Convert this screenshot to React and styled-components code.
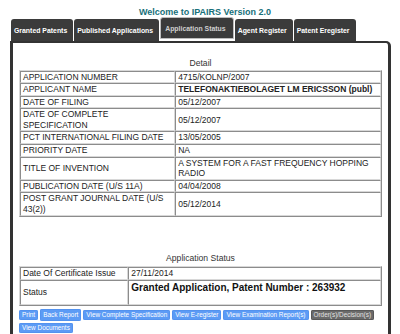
import React from 'react';
import styled, { createGlobalStyle } from 'styled-components';

const GlobalStyle = createGlobalStyle`
  body {
    margin: 0;
    background: #fff;
    font-family: "Liberation Sans", Arial, sans-serif;
  }
`;

const tabs = [
  { id: 'granted', name: 'Granted Patents' },
  { id: 'published', name: 'Published Applications' },
  { id: 'status', name: 'Application Status', active: true },
  { id: 'agent', name: 'Agent Register' },
  { id: 'eregister', name: 'Patent Eregister' },
];

const details = [
  { label: 'APPLICATION NUMBER', value: '4715/KOLNP/2007' },
  { label: 'APPLICANT NAME', value: 'TELEFONAKTIEBOLAGET LM ERICSSON (publ)', bold: true },
  { label: 'DATE OF FILING', value: '05/12/2007' },
  { label: 'DATE OF COMPLETE SPECIFICATION', value: '05/12/2007' },
  { label: 'PCT INTERNATIONAL FILING DATE', value: '13/05/2005' },
  { label: 'PRIORITY DATE', value: 'NA' },
  { label: 'TITLE OF INVENTION', value: 'A SYSTEM FOR A FAST FREQUENCY HOPPING RADIO' },
  { label: 'PUBLICATION DATE (U/S 11A)', value: '04/04/2008' },
  { label: 'POST GRANT JOURNAL DATE (U/S 43(2))', value: '05/12/2014' },
];

const actions = [
  { label: 'Print' },
  { label: 'Back Report', tall: true },
  { label: 'View Complete Specification' },
  { label: 'View E-register' },
  { label: 'View Examination Report(s)' },
  { label: 'Order(s)/Decision(s)', muted: true },
  { label: 'View Documents' },
];

const App = () => (
  <Page>
    <GlobalStyle />
    <Title>Welcome to IPAIRS Version 2.0</Title>
    <TabBar>
      {tabs.map((tab) => (
        <Tab key={tab.id} $active={tab.active}>
          {tab.name}
        </Tab>
      ))}
    </TabBar>
    <Panel>
      <Caption>Detail</Caption>
      <InfoTable>
        <tbody>
          {details.map((row) => (
            <tr key={row.label}>
              <Cell $width="43%">{row.label}</Cell>
              <Cell $bold={row.bold}>{row.value}</Cell>
            </tr>
          ))}
        </tbody>
      </InfoTable>

      <Caption $top={36}>Application Status</Caption>
      <InfoTable $top={3.5}>
        <tbody>
          <tr>
            <Cell $width="30%">Date Of Certificate Issue</Cell>
            <Cell>27/11/2014</Cell>
          </tr>
          <tr>
            <Cell>Status</Cell>
            <StatusValue>Granted Application, Patent Number : 263932</StatusValue>
          </tr>
        </tbody>
      </InfoTable>

      <ButtonRow>
        {actions.map((action) => (
          <ActionButton key={action.label} $tall={action.tall} $muted={action.muted}>
            {action.label}
          </ActionButton>
        ))}
      </ButtonRow>
    </Panel>
  </Page>
);

const Page = styled.div`
  width: 381px;
  margin-left: 10px;
`;

const Title = styled.h1`
  margin: 0;
  padding: 7px 0 0 9px;
  height: 10px;
  text-align: center;
  font-size: 9px;
  line-height: 10px;
  font-weight: bold;
  color: #17707a;
`;

const TabBar = styled.div`
  display: flex;
  align-items: flex-end;
  gap: 1px;
  height: 24px;
  padding-left: 1px;
`;

const Tab = styled.div`
  box-sizing: border-box;
  height: 22px;
  padding: 1px ${(p) => (p.$active ? '7px' : '6px')} 0 ${(p) => (p.$active ? '4px' : '3px')};
  margin-bottom: ${(p) => (p.$active ? '2px' : '0')};
  border: ${(p) => (p.$active ? '1px solid #bdbdbd' : 'none')};
  border-radius: 3px 3px 0 0;
  background: #3b3b3b;
  color: ${(p) => (p.$active ? '#cfcfcf' : '#ffffff')};
  font-size: 6.9px;
  font-weight: bold;
  line-height: ${(p) => (p.$active ? '19px' : '21px')};
  white-space: nowrap;
`;

const Panel = styled.div`
  min-height: 276px;
  padding: 15px 6px 0;
  border: 3px solid #333;
  border-top-width: 2px;
  border-bottom: none;
  border-top-right-radius: 5px;
  background: #fff;
`;

const Caption = styled.div`
  margin-top: ${(p) => p.$top || 0}px;
  text-align: center;
  font-size: 8.6px;
  line-height: 10px;
  color: #333;
`;

const InfoTable = styled.table`
  width: 100%;
  margin-top: ${(p) => (p.$top === undefined ? 1.5 : p.$top)}px;
  border-collapse: separate;
  border-spacing: 0;
  border: 1px solid;
  border-color: #d8d8d8 #8c8c8c #8c8c8c #d8d8d8;
`;

const Cell = styled.td`
  width: ${(p) => p.$width || 'auto'};
  padding: 0 2px;
  border: 1px solid;
  border-color: #8c8c8c #d8d8d8 #d8d8d8 #8c8c8c;
  font-size: 8.5px;
  line-height: 10.6px;
  font-weight: ${(p) => (p.$bold ? 'bold' : 'normal')};
  color: #222;
  vertical-align: middle;
`;

const StatusValue = styled(Cell)`
  height: 22px;
  padding-top: 1px;
  font-size: 10px;
  line-height: 12px;
  font-weight: bold;
  color: #111;
  vertical-align: top;
`;

const ButtonRow = styled.div`
  display: flex;
  flex-wrap: wrap;
  align-items: center;
  gap: 1.4px 2px;
  margin-top: 3px;
`;

const ActionButton = styled.span`
  padding: ${(p) => (p.$tall ? '2.3px 3px' : '1px 3px')};
  border-radius: 2px;
  background: ${(p) => (p.$muted ? '#6a6a6a' : '#5c9bf5')};
  box-shadow: inset 0 0 0 0.5px ${(p) => (p.$muted ? '#444' : '#4a8ae8')};
  color: ${(p) => (p.$muted ? '#e2e2e2' : '#fff')};
  font-size: 6.4px;
  line-height: 8px;
  white-space: nowrap;
  cursor: pointer;
`;

export default App;
